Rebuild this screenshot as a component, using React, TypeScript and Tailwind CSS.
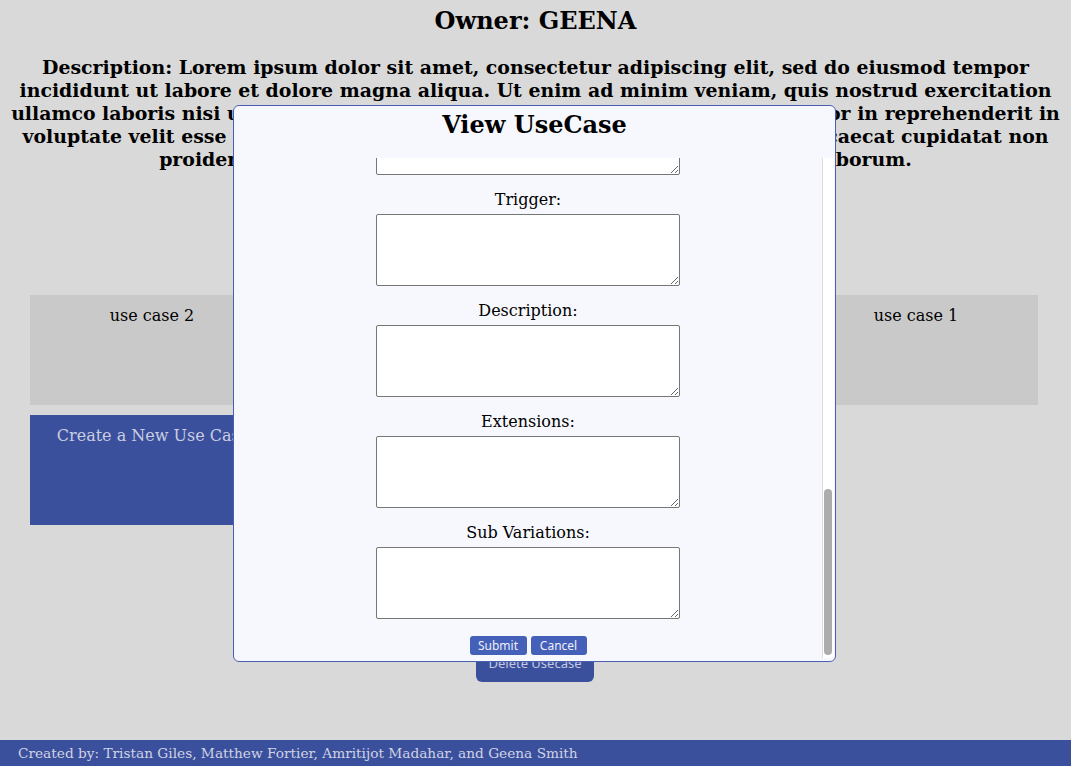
import { useEffect, useRef } from "react";

const serif = "font-['DejaVu_Serif',serif]";
const sans = "font-['Noto_Sans','Open_Sans',sans-serif]";

const fields = ["Title:", "Actors:", "Preconditions:", "Trigger:", "Description:", "Extensions:", "Sub Variations:"];

function Field({ label }: { label: string }) {
    return (
        <div className="flex flex-col items-center mb-[15px]">
            <label className="text-[16px] leading-[19px] text-black">{label}</label>
            <textarea className="mt-[5px] w-[304px] h-[72px] bg-white border border-[#767676] rounded-[2px] outline-none" />
        </div>
    );
}

export default function App() {
    const scrollRef = useRef<HTMLDivElement>(null);

    useEffect(() => {
        if (scrollRef.current) scrollRef.current.scrollTop = scrollRef.current.scrollHeight;
    }, []);

    return (
        <div className={`${serif} min-h-[766px] bg-[#d9d9d9] text-black`}>
            {/* Pagina detras */}
            <div className="px-[9px]">
                <h1 className="text-[24px] leading-[28px] font-bold text-center pt-[7px]">Owner: GEENA</h1>
                <h3 className="text-[18.9px] leading-[23px] font-bold text-center mt-[21px]">
                    Description: Lorem ipsum dolor sit amet, consectetur adipiscing elit, sed do eiusmod tempor incididunt ut labore et dolore magna aliqua. Ut enim ad minim veniam, quis nostrud exercitation ullamco laboris nisi ut aliquip ex ea commodo consequat. Duis aute irure dolor in reprehenderit in voluptate velit esse cillum dolore eu fugiat nulla pariatur. Excepteur sint occaecat cupidatat non proident, sunt in culpa qui officia deserunt mollit anim id est laborum.
                </h3>
            </div>

            <div className="px-[30px] pr-[33px] mt-[124px] grid grid-cols-4 gap-x-[10.6px] gap-y-[10px]">
                <div className="h-[110px] bg-[#c9c9c9] text-center text-[16px] pt-[9px]">use case 2</div>
                <div className="h-[110px] bg-[#c9c9c9] text-center text-[16px] pt-[9px]">use case 3</div>
                <div className="h-[110px] bg-[#c9c9c9] text-center text-[16px] pt-[9px]">use case 4</div>
                <div className="h-[110px] bg-[#c9c9c9] text-center text-[16px] pt-[9px]">use case 1</div>
                <div className="h-[110px] bg-[#3b509c] text-center text-[16px] pt-[9px] pl-[2px] text-[#c9cde0]">Create a New Use Case</div>
            </div>

            <div className="flex justify-center mt-[121px] pr-[1px]">
                <button className={`${sans} w-[118px] h-[36px] rounded-[6px] bg-[#3b509c] text-[#c3c9e0] text-[13px]`}>Delete Usecase</button>
            </div>

            <footer className="fixed bottom-0 left-0 right-0 h-[26px] bg-[#3b509c] text-[#d0d3e4] text-[13.7px] leading-[26px] pl-[18px]">
                Created by: Tristan Giles, Matthew Fortier, Amritijot Madahar, and Geena Smith
            </footer>

            {/* Modal */}
            <div className="fixed inset-0 flex items-center justify-center pr-[2px]">
                <div className="w-[603px] h-[557px] bg-[#f7f8fd] border border-[#4a5fb0] rounded-[6px] flex flex-col">
                    <h2 className="text-[24px] leading-[28px] font-bold text-center pt-[5px] mb-[19px]">View UseCase</h2>
                    <div className="h-[500px] flex mr-[1px]">
                        <div ref={scrollRef} className="flex-1 overflow-hidden">
                            <div className="flex flex-col items-center pt-[10px] pb-[3px]">
                                {fields.map(f => <Field key={f} label={f} />)}
                                <div className={`${sans} flex gap-[4px] mt-[2px]`}>
                                    <button className="w-[57px] h-[19px] rounded-[3px] bg-[#4560b8] text-[#eef0fa] text-[12px] leading-[19px]">Submit</button>
                                    <button className="w-[56px] h-[19px] rounded-[3px] bg-[#4560b8] text-[#eef0fa] text-[12px] leading-[19px]">Cancel</button>
                                </div>
                            </div>
                        </div>
                        {/* barra de scroll */}
                        <div className="w-[12px] bg-white border-l border-[#dadada] flex flex-col justify-end pb-[3px] pl-[1px]">
                            <div className="w-[8px] h-[166px] rounded-full bg-[#acacac]" />
                        </div>
                    </div>
                </div>
            </div>
        </div>
    );
}
